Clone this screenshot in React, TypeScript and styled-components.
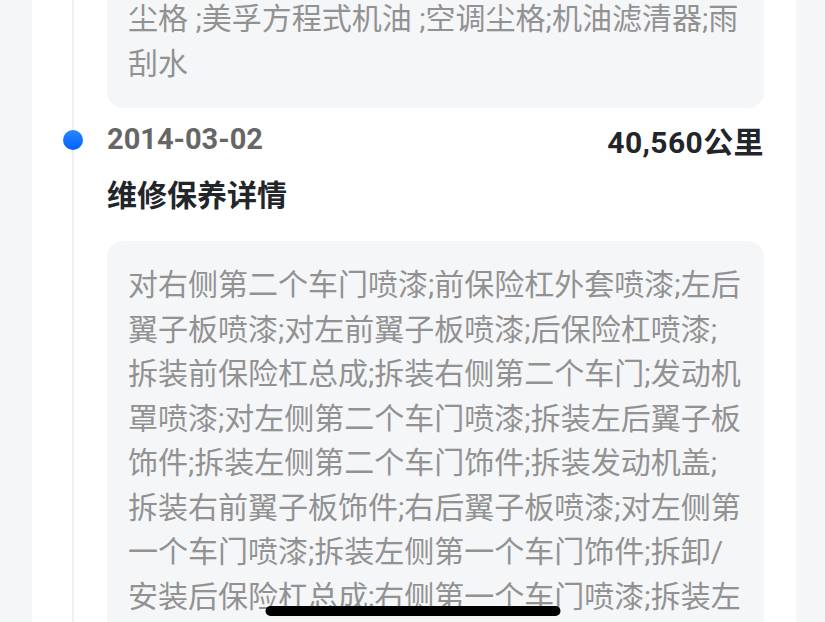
import React from 'react';
import styled, { createGlobalStyle } from 'styled-components';

const GlobalStyle = createGlobalStyle`
  html, body {
    margin: 0;
    padding: 0;
    height: 100%;
    overflow: hidden;
  }
  body {
    font-family: Roboto, "Noto Sans CJK SC", sans-serif;
    -webkit-font-smoothing: antialiased;
  }
`;

type Record = {
  date?: string;
  mileage?: string;
  title?: string;
  lines: string[];
};

const records: Record[] = [
  {
    // the head of this record is scrolled above the fold
    lines: ['尘格 ;美孚方程式机油 ;空调尘格;机油滤清器;雨', '刮水'],
  },
  {
    date: '2014-03-02',
    mileage: '40,560公里',
    title: '维修保养详情',
    lines: [
      '对右侧第二个车门喷漆;前保险杠外套喷漆;左后',
      '翼子板喷漆;对左前翼子板喷漆;后保险杠喷漆;',
      '拆装前保险杠总成;拆装右侧第二个车门;发动机',
      '罩喷漆;对左侧第二个车门喷漆;拆装左后翼子板',
      '饰件;拆装左侧第二个车门饰件;拆装发动机盖;',
      '拆装右前翼子板饰件;右后翼子板喷漆;对左侧第',
      '一个车门喷漆;拆装左侧第一个车门饰件;拆卸/',
      '安装后保险杠总成;右侧第一个车门喷漆;拆装左',
    ],
  },
];

const Page = styled.div`
  display: flex;
  height: 100vh;
  overflow: hidden;
  background: #f5f6f8;
  padding: 0 29px 0 32px;
`;

const Card = styled.div`
  flex: 1;
  background: #ffffff;
  padding-right: 32px;
`;

const Timeline = styled.div`
  margin-left: 40px;
  min-height: 100%;
  border-left: 2px solid #eff0f2;
  padding-left: 33px;
`;

const Item = styled.div<{ $partial?: boolean }>`
  padding-bottom: 11px;
  margin-top: ${(p) => (p.$partial ? '-3px' : '0')};
`;

const Header = styled.div`
  position: relative;
  display: flex;
  justify-content: space-between;
  align-items: center;
  height: 42px;
  font-weight: 700;
`;

const Dot = styled.span`
  position: absolute;
  left: -44px;
  top: 11px;
  width: 20px;
  height: 20px;
  border-radius: 50%;
  background: linear-gradient(180deg, #2a87ff 0%, #0062ff 100%);
`;

const DateText = styled.span`
  font-size: 29px;
  color: #666666;
  margin-top: -2px;
`;

const Mileage = styled.span`
  font-size: 30px;
  letter-spacing: 0.4px;
  color: #22252a;
`;

const Title = styled.div`
  margin-top: 14px;
  font-size: 30px;
  line-height: 42px;
  font-weight: 700;
  color: #22252a;
`;

const Detail = styled.div<{ $partial?: boolean }>`
  margin-top: ${(p) => (p.$partial ? '0' : '24px')};
  background: #f5f6f8;
  border-radius: ${(p) => (p.$partial ? '0 0 16px 16px' : '16px')};
  padding: ${(p) => (p.$partial ? '0 20px 22px 21px' : '22px 20px 22px 21px')};
`;

const Line = styled.div`
  font-size: 30px;
  line-height: 44.5px;
  color: #929292;
  white-space: nowrap;
`;

const HomeIndicator = styled.div`
  position: fixed;
  left: 50%;
  bottom: 6px;
  transform: translateX(-50%);
  width: 295px;
  height: 10px;
  border-radius: 5px;
  background: #000000;
`;

export default function App() {
  return (
    <>
      <GlobalStyle />
      <Page>
        <Card>
          <Timeline>
            {records.map((r, i) => {
              const partial = !r.date;
              return (
                <Item key={i} $partial={partial}>
                  {!partial && (
                    <>
                      <Header>
                        <Dot />
                        <DateText>{r.date}</DateText>
                        <Mileage>{r.mileage}</Mileage>
                      </Header>
                      <Title>{r.title}</Title>
                    </>
                  )}
                  <Detail $partial={partial}>
                    {r.lines.map((l, j) => (
                      <Line key={j}>{l}</Line>
                    ))}
                  </Detail>
                </Item>
              );
            })}
          </Timeline>
        </Card>
      </Page>
      <HomeIndicator />
    </>
  );
}
